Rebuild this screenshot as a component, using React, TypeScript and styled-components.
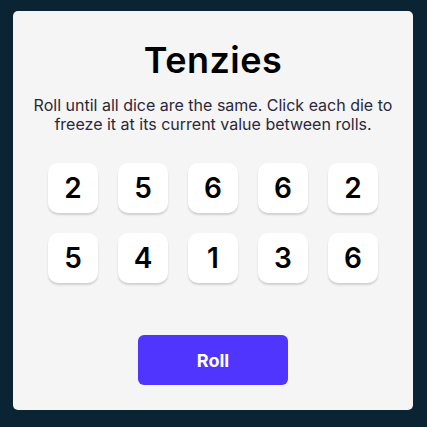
import React from "react";
import styled, { createGlobalStyle } from "styled-components";

const Global = createGlobalStyle`
  html, body { margin: 0; padding: 0; }
  body {
    background: #0B2434;
    font-family: Inter, "Noto Sans", sans-serif;
    width: 427px;
    height: 427px;
  }
`;

const Page = styled.div`
  width: 427px;
  height: 427px;
  box-sizing: border-box;
  padding: 11px 0 0 13px;
  display: flex;
  justify-content: flex-start;
  align-items: flex-start;
`;

const Card = styled.main`
  width: 400px;
  height: 399px;
  box-sizing: border-box;
  background: #F5F5F5;
  border-radius: 5px;
  padding-top: 27px;
  display: flex;
  flex-direction: column;
  align-items: center;
`;

const Title = styled.h1`
  margin: 0;
  font-size: 36px;
  font-weight: 600;
  letter-spacing: 0.5px;
  line-height: normal;
  color: #000;
`;

const Instructions = styled.p`
  margin: 14px 0 0;
  font-size: 16px;
  line-height: 19px;
  font-weight: 400;
  color: #2B283A;
  text-align: center;
  max-width: 370px;
`;

const DiceGrid = styled.div`
  margin-top: 29px;
  display: grid;
  grid-template-columns: repeat(5, 50px);
  grid-auto-rows: 50px;
  gap: 20px;
`;

const Die = styled.button<{ $held?: boolean }>`
  width: 50px;
  height: 50px;
  border: none;
  border-radius: 10px;
  background: ${(p) => (p.$held ? "#59E391" : "#FFFFFF")};
  box-shadow: 0 2px 2px rgba(0, 0, 0, 0.15);
  font-family: Inter, "Noto Sans", sans-serif;
  font-size: 28px;
  font-weight: 600;
  color: #000;
  display: flex;
  align-items: center;
  justify-content: center;
  padding: 0;
  cursor: pointer;
`;

const RollButton = styled.button`
  margin-top: 52px;
  width: 150px;
  height: 50px;
  border: none;
  border-radius: 6px;
  background: #5035FF;
  color: #FFFFFF;
  font-family: Inter, "Noto Sans", sans-serif;
  font-size: 18px;
  font-weight: 700;
  cursor: pointer;
`;

const dice = [2, 5, 6, 6, 2, 5, 4, 1, 3, 6];

export default function App() {
  return (
    <>
      <Global />
      <Page>
        <Card>
          <Title>Tenzies</Title>
          <Instructions>
            Roll until all dice are the same. Click each die to freeze it at its
            current value between rolls.
          </Instructions>
          <DiceGrid>
            {dice.map((v, i) => (
              <Die key={i}>{v}</Die>
            ))}
          </DiceGrid>
          <RollButton>Roll</RollButton>
        </Card>
      </Page>
    </>
  );
}
